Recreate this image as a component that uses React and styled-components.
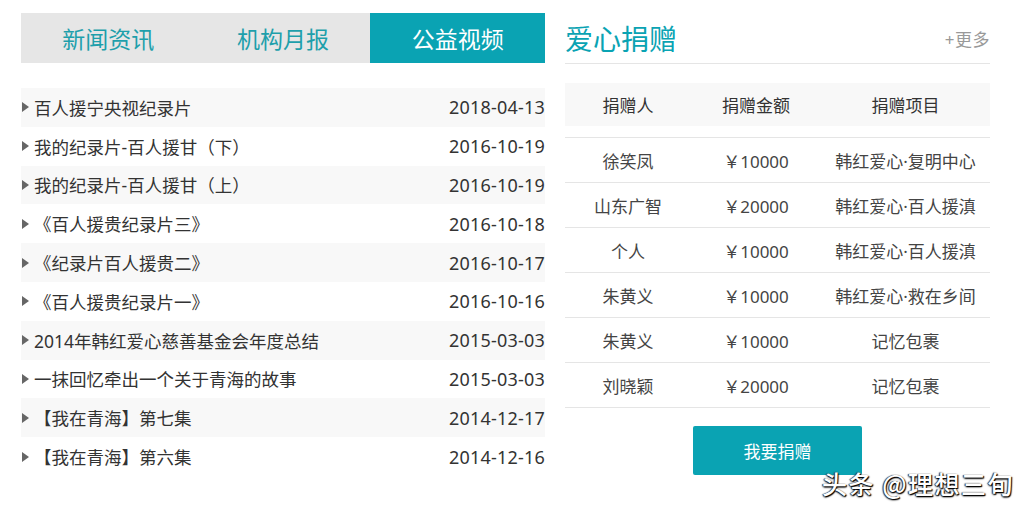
import React from "react";
import styled, { createGlobalStyle } from "styled-components";

const Global = createGlobalStyle`
  body {
    margin: 0;
    background: #fff;
    font-family: "Noto Sans", "Noto Sans CJK SC", sans-serif;
    color: #333;
  }
`;

const TEAL = "#0aa3b3";

const Page = styled.div`
  position: relative;
  width: 1030px;
  height: 511px;
  display: flex;
  gap: 20px;
  padding: 13px 0 0 21px;
  box-sizing: border-box;
  overflow: hidden;
`;

const Left = styled.div`
  width: 524px;
  display: flex;
  flex-direction: column;
`;

const Tabs = styled.div`
  display: flex;
  height: 50px;
  background: #e6e6e6;
`;

const Tab = styled.div`
  flex: 1;
  display: flex;
  align-items: center;
  justify-content: center;
  font-size: 23px;
  color: ${({ active }) => (active ? "#fff" : "#1e9fab")};
  background: ${({ active }) => (active ? TEAL : "transparent")};
`;

const List = styled.ul`
  list-style: none;
  margin: 25px 0 0;
  padding: 0;
`;

const Item = styled.li`
  height: 38.8px;
  display: flex;
  align-items: center;
  justify-content: space-between;
  background: ${({ shade }) => (shade ? "#f8f8f8" : "#fff")};
  font-size: 17.5px;
  color: #333;
`;

const ItemTitle = styled.span`
  display: flex;
  align-items: center;
  &::before {
    content: "";
    width: 0;
    height: 0;
    margin: 0 5px 0 1px;
    border-top: 5px solid transparent;
    border-bottom: 5px solid transparent;
    border-left: 7px solid #666;
  }
`;

const ItemDate = styled.span`
  font-size: 18px;
  letter-spacing: 0.2px;
  color: #333;
`;

const Right = styled.div`
  width: 425px;
  display: flex;
  flex-direction: column;
`;

const Head = styled.div`
  height: 50px;
  display: flex;
  align-items: center;
  justify-content: space-between;
  border-bottom: 1px solid #e5e5e5;
`;

const Title = styled.h2`
  margin: 0;
  font-size: 28px;
  font-weight: 400;
  color: ${TEAL};
`;

const More = styled.span`
  font-size: 17px;
  letter-spacing: 0.5px;
  color: #999;
`;

const Grid = styled.div`
  display: grid;
  grid-template-columns: 126px 130px 169px;
  align-items: center;
  text-align: center;
  font-size: 17px;
`;

const HeaderRow = styled(Grid)`
  margin-top: 19px;
  height: 43px;
  background: #f8f8f8;
  color: #333;
  margin-bottom: 11px;
`;

const Row = styled(Grid)`
  height: 44px;
  border-top: 1px solid #e5e5e5;
  color: #444;
  &:last-of-type {
    border-bottom: 1px solid #e5e5e5;
  }
`;

const Rows = styled.div``;

const Donate = styled.button`
  align-self: center;
  margin-top: 18px;
  width: 169px;
  height: 49px;
  border: none;
  border-radius: 2px;
  background: ${TEAL};
  color: #fff;
  font-family: inherit;
  font-size: 17px;
  cursor: pointer;
`;

const Watermark = styled.div`
  position: absolute;
  left: 822px;
  top: 465px;
  font-family: "Noto Sans CJK SC", sans-serif;
  font-size: 25px;
  font-weight: 500;
  color: #fff;
  letter-spacing: 1.5px;
  text-shadow: 1px 1px 1px #000, -1px 0 1px #333, 0 1px 2px #000;
`;

const news = [
  ["百人援宁央视纪录片", "2018-04-13"],
  ["我的纪录片-百人援甘（下）", "2016-10-19"],
  ["我的纪录片-百人援甘（上）", "2016-10-19"],
  ["《百人援贵纪录片三》", "2016-10-18"],
  ["《纪录片百人援贵二》", "2016-10-17"],
  ["《百人援贵纪录片一》", "2016-10-16"],
  ["2014年韩红爱心慈善基金会年度总结", "2015-03-03"],
  ["一抹回忆牵出一个关于青海的故事", "2015-03-03"],
  ["【我在青海】第七集", "2014-12-17"],
  ["【我在青海】第六集", "2014-12-16"],
];

const donations = [
  ["徐笑凤", "￥10000", "韩红爱心·复明中心"],
  ["山东广智", "￥20000", "韩红爱心·百人援滇"],
  ["个人", "￥10000", "韩红爱心·百人援滇"],
  ["朱黄义", "￥10000", "韩红爱心·救在乡间"],
  ["朱黄义", "￥10000", "记忆包裹"],
  ["刘晓颖", "￥20000", "记忆包裹"],
];

export default function App() {
  return (
    <>
      <Global />
      <Page>
        <Left>
          <Tabs>
            <Tab>新闻资讯</Tab>
            <Tab>机构月报</Tab>
            <Tab active>公益视频</Tab>
          </Tabs>
          <List>
            {news.map(([title, date], i) => (
              <Item key={i} shade={i % 2 === 0}>
                <ItemTitle>{title}</ItemTitle>
                <ItemDate>{date}</ItemDate>
              </Item>
            ))}
          </List>
        </Left>
        <Right>
          <Head>
            <Title>爱心捐赠</Title>
            <More>+更多</More>
          </Head>
          <HeaderRow>
            <span>捐赠人</span>
            <span>捐赠金额</span>
            <span>捐赠项目</span>
          </HeaderRow>
          <Rows>
            {donations.map(([name, amount, project], i) => (
              <Row key={i}>
                <span>{name}</span>
                <span>{amount}</span>
                <span>{project}</span>
              </Row>
            ))}
          </Rows>
          <Donate>我要捐赠</Donate>
        </Right>
        <Watermark>头条 @理想三旬</Watermark>
      </Page>
    </>
  );
}
